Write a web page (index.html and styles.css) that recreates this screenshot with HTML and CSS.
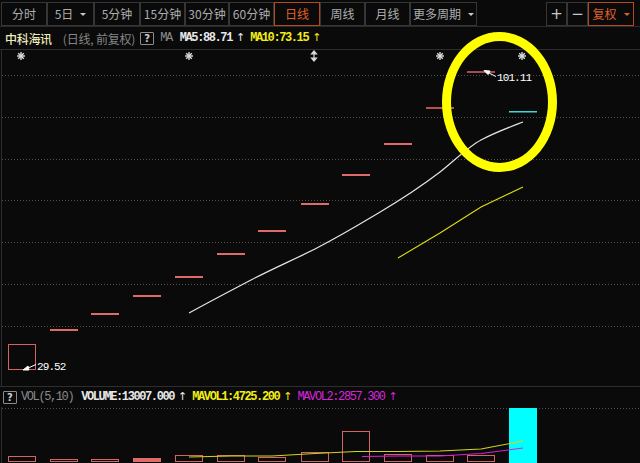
FILE: index.html
```html
<!DOCTYPE html>
<html lang="zh-CN">
<head>
<meta charset="utf-8">
<title>中科海讯 日线</title>
<link rel="stylesheet" href="styles.css">
</head>
<body>
<div class="app">
  <div class="toolbar">
    <div class="btn w46">分时</div>
    <div class="btn w47">5日<span class="caret"></span></div>
    <div class="btn w46">5分钟</div>
    <div class="btn w45">15分钟</div>
    <div class="btn w44">30分钟</div>
    <div class="btn w45">60分钟</div>
    <div class="btn w46 on">日线</div>
    <div class="btn w45">周线</div>
    <div class="btn w45">月线</div>
    <div class="btn w67">更多周期<span class="caret"></span></div>
    <div class="spacer"></div>
    <div class="btn sq">+</div>
    <div class="btn sq">−</div>
    <div class="btn w46 on">复权<span class="caret"></span></div>
  </div>

  <div class="chart-head">
    <span class="stock">中科海讯</span>
    <span class="mode">(日线, 前复权)</span>
    <span class="help">?</span>
    <span class="ind-name ma-name">MA</span>
    <span class="val c-white b">MA5:88.71<span class="arr">↑</span></span>
    <span class="val c-yellow b">MA10:73.15<span class="arr">↑</span></span>
  </div>

  <svg class="main" width="640" height="336" viewBox="0 50 640 336">
    <defs>
      <g id="star" stroke="#dcdcdc" stroke-width="1.4">
        <line x1="-4" y1="0" x2="4" y2="0"/>
        <line x1="0" y1="-4" x2="0" y2="4"/>
        <line x1="-2.8" y1="-2.8" x2="2.8" y2="2.8"/>
        <line x1="-2.8" y1="2.8" x2="2.8" y2="-2.8"/>
      </g>
    </defs>
    <line x1="1.5" y1="50" x2="1.5" y2="386" stroke="#2e2e2e"/>
    <g stroke="#4e4e4e" stroke-width="1" stroke-dasharray="1 2">
      <line x1="2" y1="75.5" x2="640" y2="75.5"/>
      <line x1="2" y1="117.5" x2="640" y2="117.5"/>
      <line x1="2" y1="159.5" x2="640" y2="159.5"/>
      <line x1="2" y1="200.5" x2="640" y2="200.5"/>
      <line x1="2" y1="242.5" x2="640" y2="242.5"/>
      <line x1="2" y1="284.5" x2="640" y2="284.5"/>
      <line x1="2" y1="326.5" x2="640" y2="326.5"/>
    </g>
    <use href="#star" x="21" y="56"/>
    <use href="#star" x="189" y="56"/>
    <use href="#star" x="440" y="56"/>
    <use href="#star" x="522" y="56"/>
    <g stroke="#d8d8d8" stroke-width="1.2" fill="#d8d8d8">
      <line x1="314" y1="53" x2="314" y2="59"/>
      <polygon points="311.5,54 314,51 316.5,54"/>
      <polygon points="311.5,58 314,61 316.5,58"/>
    </g>

    <rect x="8.5" y="344.5" width="27" height="25" fill="none" stroke="#d46464" stroke-width="1"/>
    <g fill="#e06a6a">
      <rect x="50" y="329" width="28" height="2"/>
      <rect x="91" y="313" width="28" height="2"/>
      <rect x="133" y="295" width="28" height="2"/>
      <rect x="175" y="276" width="28" height="2"/>
      <rect x="217" y="253" width="28" height="2"/>
      <rect x="258" y="230" width="28" height="2"/>
      <rect x="301" y="203" width="28" height="2"/>
      <rect x="342" y="174" width="28" height="2"/>
      <rect x="384" y="143" width="28" height="2"/>
    </g>
    <rect x="426" y="107" width="28" height="2" fill="#b85050"/>
    <rect x="467" y="71" width="28" height="2" fill="#a84a52"/>
    <rect x="509" y="111" width="28" height="1.5" fill="#3ed8d8"/>

    <path fill="none" stroke="#e4e4e4" stroke-width="1.2" d="M189,313 C210,301.5 230,291 251,280 C272,269 294,259.5 315,249 C336,238 350,230 370,218 C390,206 410,195 440,172 C455,160 468,147 481,140 C496,132 510,127 523,122"/>
    <polyline fill="none" stroke="#dede10" stroke-width="1.1" points="398,258 440,233 481,207 523,187"/>

    <g stroke="#ffffff" fill="#ffffff" stroke-width="1">
      <line x1="36" y1="364.5" x2="27" y2="368.5"/>
      <polygon points="23,370 28,366 29,370"/>
      <line x1="496" y1="76.5" x2="487" y2="72"/>
      <polygon points="484,70.5 490,71 488,74.5"/>
    </g>
    <text x="37" y="370" class="lbl">29.52</text>
    <text x="497" y="81" class="lbl">101.11</text>
  </svg>

  <div class="vol-head">
    <span class="help">?</span>
    <span class="ind-name vol-name">VOL(5,10)</span>
    <span class="val c-white b v1">VOLUME:13007.000<span class="arr">↑</span></span>
    <span class="val c-yellow b">MAVOL1:4725.200<span class="arr">↑</span></span>
    <span class="val c-magenta">MAVOL2:2857.300<span class="arr">↑</span></span>
  </div>

  <svg class="vol" width="640" height="56" viewBox="0 407 640 56">
    <line x1="1.5" y1="407" x2="1.5" y2="463" stroke="#2e2e2e"/>
    <line x1="2" y1="408.5" x2="640" y2="408.5" stroke="#4e4e4e" stroke-dasharray="1 2"/>
    <g fill="none" stroke="#d46464" stroke-width="1">
      <rect x="8.5" y="456.5" width="27" height="5"/>
      <rect x="50.5" y="459.5" width="27" height="2"/>
      <rect x="91.5" y="459.5" width="27" height="2"/>
      <rect x="175.5" y="455.5" width="27" height="6"/>
      <rect x="217.5" y="455.5" width="27" height="6"/>
      <rect x="258.5" y="457.5" width="27" height="4"/>
      <rect x="301.5" y="452.5" width="27" height="9"/>
      <rect x="342.5" y="431.5" width="27" height="30"/>
      <rect x="384.5" y="454.5" width="27" height="7"/>
      <rect x="426.5" y="455.5" width="27" height="6"/>
      <rect x="467.5" y="455.5" width="27" height="6"/>
    </g>
    <rect x="133" y="458" width="28" height="4" fill="#e06a6a"/>
    <rect x="509" y="408" width="28" height="55" fill="#00ffff"/>
    <polyline fill="none" stroke="#d4d420" stroke-width="1.1" points="189,457 231,456 272,456 315,453.5 356,451.5 398,451.5 440,451 481,449 523,441"/>
    <polyline fill="none" stroke="#d820d8" stroke-width="1.1" points="362,456.5 398,456 440,456 481,453.5 523,448"/>
  </svg>

  <div class="mark"></div>
</div>
</body>
</html>
```

FILE: styles.css
```css
* { box-sizing: border-box; }
html, body { margin: 0; padding: 0; background: #0a0a0a; }
body {
  width: 640px;
  height: 463px;
  overflow: hidden;
  font-family: "Noto Sans CJK SC", "Noto Sans", sans-serif;
}
.app {
  position: relative;
  width: 640px;
  height: 463px;
  display: flex;
  flex-direction: column;
  background: #0a0a0a;
}

/* toolbar */
.toolbar {
  height: 27px;
  flex: none;
  display: flex;
  align-items: flex-start;
  padding: 2px 6px 0 1px;
  border-bottom: 1px solid #2a2a2a;
}
.btn {
  height: 24px;
  border: 1px solid #363636;
  display: flex;
  align-items: center;
  justify-content: center;
  gap: 7px;
  color: #adadad;
  font-size: 12px;
  line-height: 1;
  flex: none;
}
.btn.on {
  border-color: #b34a1e;
  color: #e0602c;
}
.w44 { width: 44px; }
.w45 { width: 45px; }
.w46 { width: 46px; }
.w47 { width: 47px; }
.w67 { width: 67px; }
.sq { width: 21px; font-family: "DejaVu Sans", sans-serif; font-size: 15px; color: #c8c8c8; }
.spacer { flex: 1; }
.caret {
  width: 0;
  height: 0;
  border-left: 3px solid transparent;
  border-right: 3px solid transparent;
  border-top: 3px solid #c8c8c8;
}
.btn.on .caret { border-top-color: #e0602c; }

/* chart header */
.chart-head {
  height: 23px;
  flex: none;
  display: flex;
  align-items: center;
  padding-left: 5px;
  border-bottom: 1px solid #2e2e2e;
  white-space: nowrap;
}
.stock { color: #ecebbc; font-size: 12px; letter-spacing: -0.3px; font-weight: 500; }
.mode { color: #858585; font-size: 12px; margin-left: 11px; letter-spacing: -0.2px; }
.help {
  width: 14px;
  height: 13px;
  border: 1px solid #8c8c8c;
  border-radius: 1px;
  color: #d0d0d0;
  font: bold 10px "DejaVu Sans", sans-serif;
  display: flex;
  align-items: center;
  justify-content: center;
  margin-left: 5px;
  flex: none;
}
.ind-name {
  font-family: "Liberation Mono", monospace;
  font-size: 12px;
  color: #8a8a8a;
  letter-spacing: -1.4px;
  margin-left: 6px;
}
.ma-name { margin-right: 3px; }
.val {
  font-family: "Liberation Mono", monospace;
  font-size: 12px;
  letter-spacing: -1.4px;
  margin-left: 5px;
}
.b { font-weight: bold; }
.arr {
  font-family: "DejaVu Sans", sans-serif;
  font-weight: normal;
  font-size: 11px;
  margin-left: 4px;
  letter-spacing: 0;
}
.c-white { color: #e8e8e8; }
.c-yellow { color: #f0ee18; }
.c-magenta { color: #d826d8; }

/* charts */
.main, .vol { display: block; flex: none; }
.lbl {
  font-family: "Liberation Mono", monospace;
  font-size: 11px;
  fill: #ffffff;
  letter-spacing: -0.9px;
}

/* volume header */
.vol-head {
  height: 21px;
  flex: none;
  display: flex;
  align-items: center;
  padding-left: 3px;
  border-top: 1px solid #2e2e2e;
  white-space: nowrap;
}
.vol-head .help { margin-left: 0; }
.vol-name { margin-left: 4px; }
.v1 { margin-left: 8px; }

/* annotation ring drawn over chart */
.mark {
  position: absolute;
  left: 442px;
  top: 32px;
  width: 115px;
  height: 140px;
  border: 9px solid #ffff00;
  border-radius: 50%;
  pointer-events: none;
}
```
